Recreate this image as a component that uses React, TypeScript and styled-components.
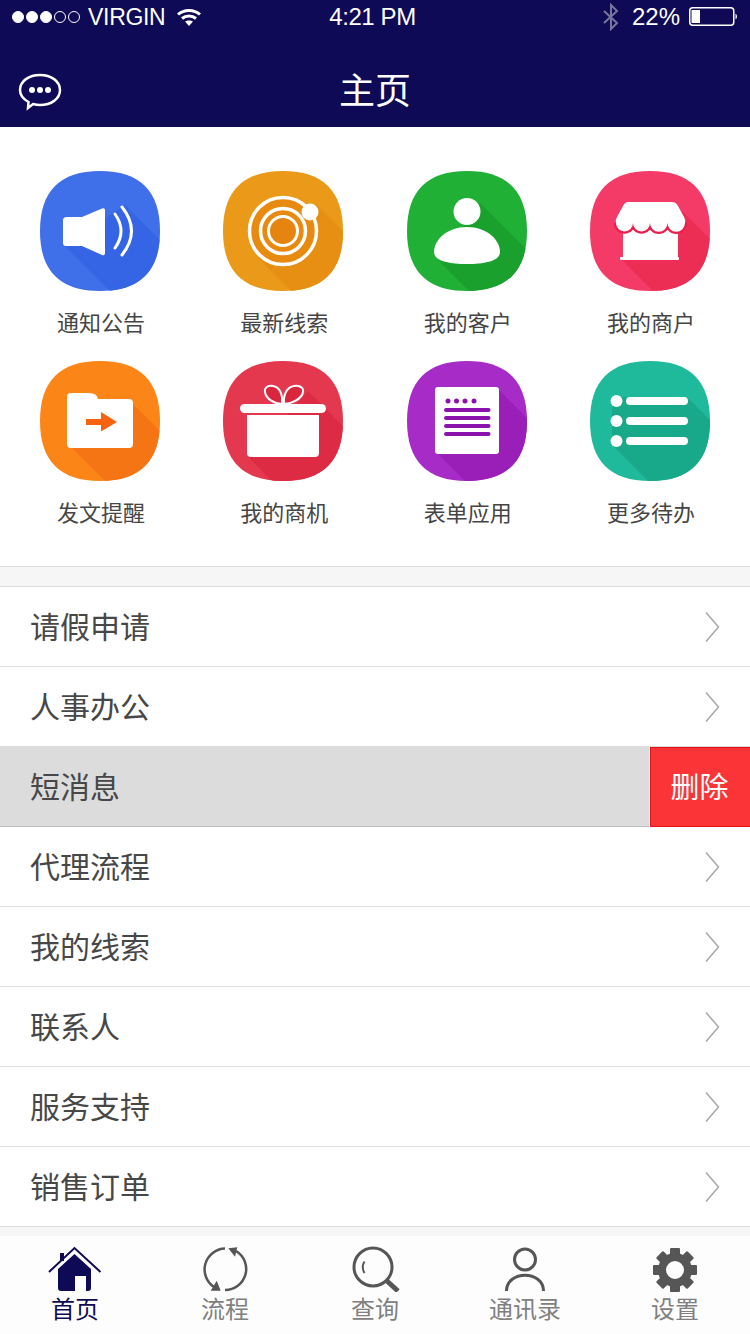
import React from "react";
import styled, { createGlobalStyle } from "styled-components";

const GlobalStyle = createGlobalStyle`
  html, body {
    margin: 0;
    padding: 0;
    background: #fff;
  }
  body {
    font-family: "Liberation Sans", "Noto Sans CJK SC", sans-serif;
  }
`;

const Page = styled.div`
  width: 750px;
  height: 1334px;
  display: flex;
  flex-direction: column;
  overflow: hidden;
  background: #fff;
`;

const Header = styled.header`
  height: 127px;
  flex: none;
  display: flex;
  flex-direction: column;
  background: #0f0a55;
  color: #fff;
`;

const StatusBar = styled.div`
  height: 34px;
  display: grid;
  grid-template-columns: 1fr auto 1fr;
  align-items: center;
  padding: 0 12px;
  font-size: 24px;
`;

const StatusLeft = styled.div`
  display: flex;
  align-items: center;
`;

const StatusRight = styled.div`
  display: flex;
  align-items: center;
  justify-content: flex-end;
  margin-right: 1px;
`;

const Dot = styled.span<{ $on: boolean }>`
  width: 12px;
  height: 12px;
  box-sizing: border-box;
  margin-right: 2px;
  border-radius: 50%;
  border: 1px solid #fff;
  background: ${(p) => (p.$on ? "#fff" : "transparent")};
`;

const Carrier = styled.span`
  margin-left: 6px;
  margin-right: 12px;
  font-size: 23px;
  letter-spacing: -0.3px;
`;

const Clock = styled.span`
  margin-right: 5px;
  letter-spacing: -0.4px;
`;

const Percent = styled.span`
  margin-left: 12px;
  margin-right: 9px;
`;

const NavBar = styled.div`
  flex: 1;
  display: flex;
  align-items: center;
  justify-content: center;
  position: relative;
`;

const NavTitle = styled.h1`
  margin: 15px 0 0;
  font-size: 36px;
  font-weight: 400;
  font-family: "Noto Sans CJK SC", sans-serif;
`;

const ChatButton = styled.div`
  position: absolute;
  left: 18px;
  top: 39px;
  width: 44px;
  height: 38px;
`;

const Shortcuts = styled.section`
  flex: none;
  height: 439px;
  box-sizing: border-box;
  padding-top: 44px;
  padding-left: 40px;
  display: grid;
  grid-template-columns: repeat(4, 120px);
  grid-auto-rows: 190px;
  column-gap: 63.33px;
`;

const Shortcut = styled.div`
  display: flex;
  flex-direction: column;
  align-items: center;
`;

const ShortcutIcon = styled.svg`
  width: 120px;
  height: 120px;
  display: block;
`;

const ShortcutLabel = styled.span`
  margin-top: 14px;
  margin-left: 2px;
  font-size: 22px;
  line-height: 32px;
  color: #454545;
  font-family: "Noto Sans CJK SC", sans-serif;
  white-space: nowrap;
`;

const Band = styled.div<{ $h: number; $ruled?: boolean }>`
  flex: none;
  height: ${(p) => p.$h}px;
  box-sizing: border-box;
  background: #f6f6f6;
  border-top: ${(p) => (p.$ruled ? "1px solid #dcdcdc" : "0")};
`;

const Rows = styled.div`
  flex: none;
  border-top: 1px solid #dcdcdc;
`;

const Row = styled.div<{ $active?: boolean }>`
  height: 80px;
  box-sizing: border-box;
  display: flex;
  align-items: center;
  padding-left: 30px;
  border-bottom: 1px solid ${(p) => (p.$active ? "#bdbdbd" : "#dcdcdc")};
  background: ${(p) => (p.$active ? "#dcdcdc" : "#fff")};
  position: relative;
`;

const RowLabel = styled.span`
  flex: 1;
  margin-top: -4px;
  font-size: 30px;
  color: #474747;
  font-family: "Noto Sans CJK SC", sans-serif;
`;

const Chevron = styled.svg`
  width: 15px;
  height: 30px;
  margin-right: 30px;
`;

const DeleteButton = styled.div`
  position: absolute;
  right: 0;
  top: 0;
  bottom: -1px;
  width: 100px;
  box-sizing: border-box;
  padding: 0 2px 4px 0;
  border: 1px solid #e60f12;
  border-right: 0;
  box-shadow: -1px 0 0 #fff;
  background: #fb3537;
  color: #fff;
  font-size: 29px;
  font-family: "Noto Sans CJK SC", sans-serif;
  display: flex;
  align-items: center;
  justify-content: center;
`;

const TabBar = styled.nav`
  flex: 1;
  display: grid;
  grid-template-columns: repeat(5, 150px);
  background: #fdfdfd;
`;

const Tab = styled.div`
  display: flex;
  flex-direction: column;
  align-items: center;
  padding-top: 10px;
`;

const TabIcon = styled.svg`
  width: 56px;
  height: 46px;
  display: block;
`;

const TabLabel = styled.span<{ $active?: boolean }>`
  font-size: 24px;
  line-height: 32px;
  color: ${(p) => (p.$active ? "#0f0a55" : "#808080")};
  font-family: "Noto Sans CJK SC", sans-serif;
`;

const BLOB = "M60 0C100 0 120 20 120 60C120 100 100 120 60 120C20 120 0 100 0 60C0 20 20 0 60 0Z";

type TileProps = {
  id: string;
  base: string;
  shade: string;
  shadow: string;
  children: React.ReactNode;
};

// Rounded tile with a long 45 degree shadow running out of the glyph
function Tile({ id, base, shade, shadow, children }: TileProps) {
  return (
    <ShortcutIcon viewBox="0 0 120 120">
      <defs>
        <clipPath id={id}>
          <path d={BLOB} />
        </clipPath>
      </defs>
      <path d={BLOB} fill={base} />
      <g clipPath={`url(#${id})`}>
        <polygon points={shadow} fill={shade} />
      </g>
      {children}
    </ShortcutIcon>
  );
}

const SpeakerTile = () => (
  <Tile id="t-speaker" base="#3f6fe9" shade="#3565e5" shadow="85,34 150,99 150,150 100,150 25,75">
    <path d="M27 46H42L62 37.5Q65 36.5 65 39V82Q65 85 62 84L42 75H26Q23 75 23 72V49Q23 46 27 46Z" fill="#fff" />
    <path d="M75 43Q87 60 75 77" fill="none" stroke="#fff" strokeWidth="3" strokeLinecap="round" />
    <path d="M82 36Q101 60 82 84" fill="none" stroke="#fff" strokeWidth="3" strokeLinecap="round" />
  </Tile>
);

const RingsTile = () => (
  <Tile id="t-rings" base="#ea9a18" shade="#e68f12" shadow="93,33 150,90 150,150 98,150 35,87">
    <circle cx="60" cy="60" r="33.5" fill="#e88a10" stroke="#fff" strokeWidth="3.5" />
    <circle cx="60" cy="60" r="22.5" fill="none" stroke="#fff" strokeWidth="3.5" />
    <circle cx="60" cy="60" r="14.5" fill="#e5840e" stroke="#fff" strokeWidth="3" />
    <circle cx="87" cy="41" r="8.5" fill="#fff" />
  </Tile>
);

const PersonTile = () => (
  <Tile id="t-person" base="#20b036" shade="#1aa02d" shadow="73,32 150,109 150,150 92,150 33,91">
    <circle cx="60" cy="40.5" r="13.5" fill="#fff" />
    <path d="M60 56C80 56 93 69 93 81C93 90 78 93 60 93C42 93 27 90 27 81C27 69 40 56 60 56Z" fill="#fff" />
  </Tile>
);

const LOBES = "A8.75 8.75 0 0 1 77.5 52A8.75 8.75 0 0 1 60 52A8.5 8.5 0 0 1 43 52A8.5 8.5 0 0 1 26 52";

const ShopTile = () => (
  <Tile id="t-shop" base="#f43b68" shade="#ec2d54" shadow="92,40 150,98 150,150 93,150 32,89">
    <rect x="33" y="52" width="55" height="35" fill="#fff" />
    <path d={`M95 52${LOBES}`} fill="none" stroke="#e8214c" strokeWidth="4.5" />
    <path d={`M38 31H82Q86 31 88 35L94 46Q96 49 95 52${LOBES}Q25 49 27 46L33 35Q35 31 38 31Z`} fill="#fff" />
    <rect x="30" y="86" width="59" height="3" rx="1" fill="#fff" />
  </Tile>
);

const FolderTile = () => (
  <Tile id="t-folder" base="#fb8516" shade="#f57414" shadow="93,43 150,100 150,150 95,150 33,88">
    <path d="M31 32H49Q57 32 58 38H89Q93 38 93 42V83Q93 87 89 87H31Q27 87 27 83V36Q27 32 31 32Z" fill="#fff" />
    <path d="M46 58H61V51L77 61L61 70.5V64H46Z" fill="#f9620f" />
  </Tile>
);

const GiftTile = () => (
  <Tile id="t-gift" base="#e4384f" shade="#dc2b42" shadow="85,30 150,95 150,150 79,150 26,97">
    <path d="M59 43C52 43 43 38 42 31C41 26 46 24 50 25C56 26 60 32 59 43Z" fill="#d9263c" stroke="#fff" strokeWidth="2" />
    <path d="M61 43C68 43 79 38 80 31C81 26 75 24 71 25C65 26 60 32 61 43Z" fill="#d9263c" stroke="#fff" strokeWidth="2" />
    <rect x="17" y="43" width="86" height="9" rx="4.5" fill="#fff" />
    <path d="M24 54H96V92Q96 96 92 96H28Q24 96 24 92Z" fill="#fff" />
  </Tile>
);

const FormTile = () => (
  <Tile id="t-form" base="#a62bc7" shade="#9a1fb8" shadow="92,29 150,87 150,150 88,150 31,93">
    <rect x="28" y="26" width="64" height="67" rx="3" fill="#fff" />
    {[41, 49.5, 58, 67].map((x) => (
      <circle key={x} cx={x} cy="40" r="2.5" fill="#8c12ae" />
    ))}
    {[49, 57, 65, 73].map((y) => (
      <rect key={y} x="37" y={y - 2} width="46.5" height="4" rx="2" fill="#8c12ae" />
    ))}
  </Tile>
);

const ListTile = () => (
  <Tile id="t-list" base="#1fba9c" shade="#17a98a" shadow="98,37 150,89 150,150 88,150 22,84 22,36">
    {[40, 60, 80].map((y) => (
      <React.Fragment key={y}>
        <circle cx="26.5" cy={y} r="6" fill="#fff" />
        <rect x="36" y={y - 4} width="62" height="8" rx="4" fill="#fff" />
      </React.Fragment>
    ))}
  </Tile>
);

const shortcuts = [
  { label: "通知公告", icon: <SpeakerTile /> },
  { label: "最新线索", icon: <RingsTile /> },
  { label: "我的客户", icon: <PersonTile /> },
  { label: "我的商户", icon: <ShopTile /> },
  { label: "发文提醒", icon: <FolderTile /> },
  { label: "我的商机", icon: <GiftTile /> },
  { label: "表单应用", icon: <FormTile /> },
  { label: "更多待办", icon: <ListTile /> },
];

const rows = ["请假申请", "人事办公", "短消息", "代理流程", "我的线索", "联系人", "服务支持", "销售订单"];

const HomeIcon = () => (
  <TabIcon viewBox="0 0 56 46">
    <path d="M2 26L27.5 2L53.5 26" fill="none" stroke="#0f0a55" strokeWidth="2" />
    <rect x="13" y="7" width="4" height="8" fill="#0f0a55" />
    <path d="M27.5 8L44 23V42Q44 45 41 45H39V30H28V45H14Q11 45 11 42V23Z" fill="#0f0a55" />
  </TabIcon>
);

const FlowIcon = () => (
  <TabIcon viewBox="0 0 56 46">
    <path d="M28 2.5A21 21 0 0 0 17 41" fill="none" stroke="#565656" strokeWidth="2.5" />
    <path d="M28 44A21 21 0 0 0 39 5" fill="none" stroke="#565656" strokeWidth="2.5" />
    <polygon points="19.7,34.7 23.7,44.7 13.7,44.7" fill="#565656" />
    <polygon points="31.3,2.3 40.3,1.3 38,10.7" fill="#565656" />
  </TabIcon>
);

const SearchIcon = () => (
  <TabIcon viewBox="0 0 56 46">
    <circle cx="26" cy="21" r="19" fill="none" stroke="#565656" strokeWidth="3" />
    <path d="M40 35L51 45" fill="none" stroke="#565656" strokeWidth="5" />
    <path d="M17.5 15.5Q14 21 17.5 27" fill="none" stroke="#565656" strokeWidth="2" />
  </TabIcon>
);

const ContactIcon = () => (
  <TabIcon viewBox="0 0 56 46">
    <circle cx="28" cy="13.5" r="10.5" fill="none" stroke="#565656" strokeWidth="3" />
    <path d="M9.5 45C9.5 24 46.5 24 46.5 45" fill="none" stroke="#565656" strokeWidth="3" />
  </TabIcon>
);

const GearIcon = () => {
  const teeth = [0, 45, 90, 135, 180, 225, 270, 315];
  return (
    <TabIcon viewBox="0 0 56 46">
      {teeth.map((a) => (
        <rect key={a} x="23" y="2" width="10" height="10" rx="1" fill="#565656" transform={`rotate(${a} 28 24)`} />
      ))}
      <circle cx="28" cy="24" r="13" fill="none" stroke="#565656" strokeWidth="8" />
    </TabIcon>
  );
};

const tabs = [
  { label: "首页", icon: <HomeIcon />, active: true },
  { label: "流程", icon: <FlowIcon /> },
  { label: "查询", icon: <SearchIcon /> },
  { label: "通讯录", icon: <ContactIcon /> },
  { label: "设置", icon: <GearIcon /> },
];

export default function App() {
  return (
    <Page>
      <GlobalStyle />
      <Header>
        <StatusBar>
          <StatusLeft>
            {[true, true, true, false, false].map((on, i) => (
              <Dot key={i} $on={on} />
            ))}
            <Carrier>VIRGIN</Carrier>
            <svg width="24" height="18" viewBox="0 0 24 18">
              <path d="M1 6.5C7 1 17 1 23 6.5" fill="none" stroke="#fff" strokeWidth="3" />
              <path d="M5 10.5C9 7 15 7 19 10.5" fill="none" stroke="#fff" strokeWidth="3" />
              <path d="M12 18L8 13.5C10 12 14 12 16 13.5Z" fill="#fff" />
            </svg>
          </StatusLeft>
          <Clock>4:21 PM</Clock>
          <StatusRight>
            <svg width="18" height="28" viewBox="0 0 18 28">
              <path d="M2 8L15 20L9 26V2L15 8L2 20" fill="none" stroke="#76769c" strokeWidth="2" />
            </svg>
            <Percent>22%</Percent>
            <svg width="48" height="20" viewBox="0 0 48 20">
              <rect x="0.75" y="0.75" width="44" height="17.5" rx="3" fill="none" stroke="#fff" strokeWidth="1.5" />
              <rect x="2.5" y="3" width="8.5" height="13" fill="#fff" />
              <path d="M46.5 6.5Q48 7.5 48 9.5Q48 11.5 46.5 12.5Z" fill="#fff" />
            </svg>
          </StatusRight>
        </StatusBar>
        <NavBar>
          <ChatButton>
            <svg width="44" height="38" viewBox="0 0 44 38">
              <path
                d="M22 2C33 2 42 8 42 17C42 26 33 32 22 32C19 32 17 31.5 15 31L10 35L10.5 29C5 26 2 22 2 17C2 8 11 2 22 2Z"
                fill="none"
                stroke="#fff"
                strokeWidth="2.5"
              />
              <circle cx="14" cy="17" r="3" fill="#fff" />
              <circle cx="22" cy="17" r="3" fill="#fff" />
              <circle cx="30" cy="17" r="3" fill="#fff" />
            </svg>
          </ChatButton>
          <NavTitle>主页</NavTitle>
        </NavBar>
      </Header>

      <Shortcuts>
        {shortcuts.map((s) => (
          <Shortcut key={s.label}>
            {s.icon}
            <ShortcutLabel>{s.label}</ShortcutLabel>
          </Shortcut>
        ))}
      </Shortcuts>

      <Band $h={20} $ruled />
      <Rows>
        {rows.map((label, i) => (
          <Row key={label} $active={i === 2}>
            <RowLabel>{label}</RowLabel>
            {i === 2 ? (
              <DeleteButton>删除</DeleteButton>
            ) : (
              <Chevron viewBox="0 0 15 30">
                <path d="M1 0.5L13.5 15L1 29.5" fill="none" stroke="#a8a8a8" strokeWidth="1.5" />
              </Chevron>
            )}
          </Row>
        ))}
      </Rows>
      <Band $h={9} />
      <TabBar>
        {tabs.map((t) => (
          <Tab key={t.label}>
            {t.icon}
            <TabLabel $active={t.active}>{t.label}</TabLabel>
          </Tab>
        ))}
      </TabBar>
    </Page>
  );
}
